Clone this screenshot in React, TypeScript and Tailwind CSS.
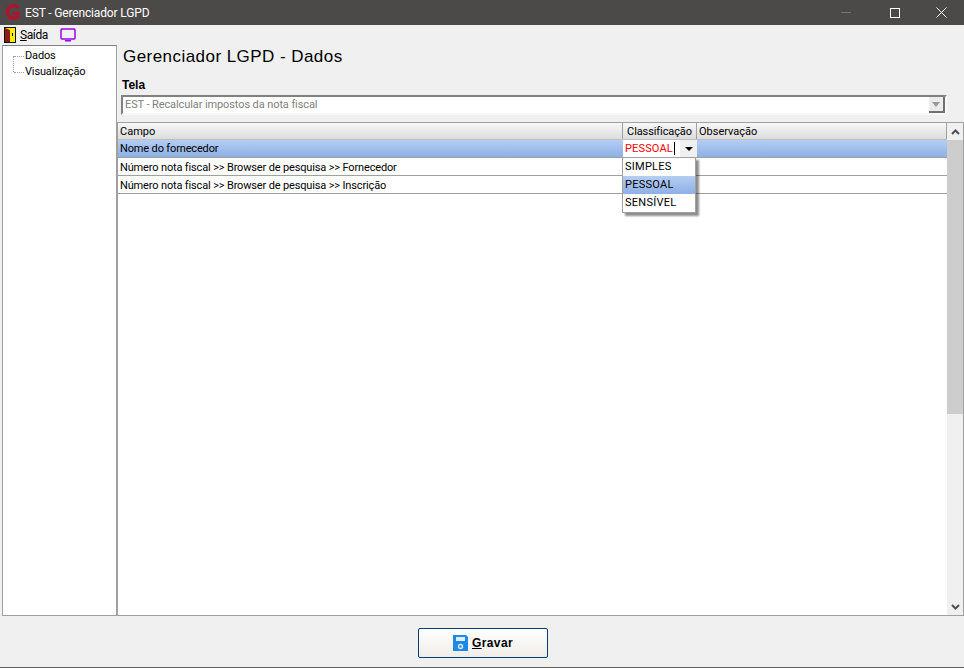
const rows = [
  "Nome do fornecedor",
  "Número nota fiscal >> Browser de pesquisa >> Fornecedor",
  "Número nota fiscal >> Browser de pesquisa >> Inscrição",
];

const selected = "bg-gradient-to-b from-[#b5cdf3] to-[#8eb0e6]";

function GridRow({ label, active }: { label: string; active: boolean }) {
  return (
    <div className={`flex h-[18px] border-b border-[#a0a0a0] ${active ? selected : "bg-white"}`}>
      <div className={`w-[505px] shrink-0 pl-[2px] tracking-[-0.15px] text-black ${active ? "leading-[17px]" : "leading-[19px]"}`}>{label}</div>
      {active ? (
        <div className="flex w-[74px] shrink-0 items-center bg-white">
          <span className="pl-[2px] leading-[17px] tracking-[0.15px] text-[#ff0000]">PESSOAL</span>
          <span className="ml-[1px] h-[13px] w-px bg-black" />
          <div className="ml-auto flex h-full w-[17px] items-center justify-center bg-[#f0f0f0]">
            <span className="h-0 w-0 border-x-[4px] border-t-[4px] border-x-transparent border-t-black" />
          </div>
        </div>
      ) : (
        <div className="w-[74px] shrink-0" />
      )}
      <div className="flex-1" />
    </div>
  );
}

export default function App() {
  return (
    <div className="flex h-[668px] w-[964px] flex-col overflow-hidden bg-[#f0f0f0] font-['Roboto',sans-serif] text-[11px] text-black">
      {/* Title bar */}
      <div className="flex h-[25px] shrink-0 items-center bg-[#4b4a48] pl-[4px] text-white">
        <svg width="17" height="17" viewBox="0 0 17 17" fill="none">
          <path d="M14.500 4A6.300 6.300 0 1 0 14 12.500V9.500H8.500" stroke="#a8172f" strokeWidth="3.600" />
        </svg>
        <span className="ml-[4px] text-[12px] tracking-[-0.15px]">EST - Gerenciador LGPD</span>
        <div className="ml-auto flex h-full items-center">
          <span className="mr-[39px] h-px w-[10px] bg-[#777673]" />
          <span className="mr-[36px] h-[10px] w-[10px] border border-white" />
          <svg className="mr-[17px]" width="11" height="11" viewBox="0 0 11 11" stroke="white" fill="none">
            <path d="M0.5 0.5L10.5 10.5M10.5 0.5L0.5 10.5" />
          </svg>
        </div>
      </div>

      {/* Menu */}
      <div className="flex h-[20px] shrink-0 items-center pl-[4px] text-[12px]">
        <svg width="12" height="16" viewBox="0 0 12 16">
          <rect width="12" height="16" fill="#111" />
          <rect x="1" y="1" width="10" height="14" fill="#ffee00" />
          <path d="M1 1L6 3V15H1Z" fill="#8c1f14" />
          <rect x="8" y="6" width="1" height="3" fill="#111" />
        </svg>
        <span className="ml-[4px] tracking-[-0.4px]">
          <span className="underline">S</span>aída
        </span>
        <svg className="ml-[12px]" width="16" height="14" viewBox="0 0 16 14" fill="none">
          <rect x="1" y="1" width="14" height="10" rx="1" stroke="#a000f0" strokeWidth="1.5" />
          <rect x="5" y="12" width="6" height="1.5" fill="#a000f0" />
        </svg>
      </div>

      {/* Body */}
      <div className="flex min-h-0 flex-1 pl-[2px]">
        {/* Tree */}
        <div className="relative flex h-[571px] w-[115px] shrink-0 flex-col gap-[2px] border border-[#a0a0a0] border-t-[#808080] bg-white pt-[3px]">
          <span className="absolute left-[10px] top-[10px] h-[16px] border-l border-dotted border-[#a0a0a0]" />
          {["Dados", "Visualização"].map((item) => (
            <div key={item} className="flex h-[14px] items-center pl-[11px] leading-[14px] tracking-[-0.15px]">
              <span className="mr-[1px] w-[10px] border-t border-dotted border-[#a0a0a0]" />
              {item}
            </div>
          ))}
        </div>

        <div className="flex min-w-0 flex-1 flex-col">
          <h1 className="ml-[6px] mt-[1px] h-[32px] font-['Liberation_Sans',sans-serif] text-[17px] leading-[22px] tracking-[0.45px]">Gerenciador LGPD - Dados</h1>
          <div className="ml-[5px] h-[17px] font-['Liberation_Sans',sans-serif] text-[12px] font-bold leading-[14px]">Tela</div>

          {/* Combo */}
          <div className="ml-[4px] mr-[17px] flex h-[20px] items-center border-2 border-[#808080] border-b-[#f8f8f8] border-r-[#f8f8f8] bg-white pl-[2px] tracking-[-0.1px] text-[#808080]">
            EST - Recalcular impostos da nota fiscal
            <div className="ml-auto flex h-[16px] w-[16px] items-center justify-center border-b-2 border-r-2 border-[#707070] bg-[#ececec]">
              <span className="h-0 w-0 border-x-[4px] border-t-[5px] border-x-transparent border-t-[#999]" />
            </div>
          </div>

          {/* Grid */}
          <div className="relative mt-[7px] flex h-[494px] border border-[#a0a0a0] bg-white">
            <div className="min-w-0 flex-1">
              <div className="flex h-[17px] border-b border-[#c0c0c0] bg-gradient-to-b from-[#f8f8f8] to-[#dcdcdc]">
                <div className="w-[505px] shrink-0 border-r border-[#a0a0a0] pl-[2px] leading-[17px]">Campo</div>
                <div className="w-[74px] shrink-0 border-r border-[#a0a0a0] text-center leading-[17px] tracking-[-0.1px]">Classificação</div>
                <div className="flex-1 border-r border-[#a0a0a0] pl-[2px] leading-[17px]">Observação</div>
              </div>
              {rows.map((row, i) => (
                <GridRow key={row} label={row} active={i === 0} />
              ))}
            </div>

            {/* Scrollbar */}
            <div className="flex w-[16px] shrink-0 flex-col bg-[#f0f0f0]">
              <div className="flex h-[17px] shrink-0 items-center justify-center">
                <svg width="9" height="6" viewBox="0 0 9 6" fill="none" stroke="#505050" strokeWidth="2">
                  <path d="M1 5L4.500 1.500L8 5" />
                </svg>
              </div>
              <div className="h-[274px] w-full bg-[#cdcdcd]" />
              <div className="mt-auto flex h-[17px] shrink-0 items-center justify-center">
                <svg width="9" height="6" viewBox="0 0 9 6" fill="none" stroke="#505050" strokeWidth="2">
                  <path d="M1 1L4.500 4.500L8 1" />
                </svg>
              </div>
            </div>

            {/* Dropdown list */}
            <div className="absolute left-[504px] top-[34px] w-[74px] border border-[#a0a0a0] bg-white tracking-[0.25px] shadow-[3px_3px_2px_rgba(0,0,0,0.45)]">
              <div className="h-[18px] pl-[2px] leading-[18px]">SIMPLES</div>
              <div className={`h-[18px] pl-[2px] leading-[18px] ${selected}`}>PESSOAL</div>
              <div className="h-[18px] pl-[2px] leading-[18px]">SENSÍVEL</div>
            </div>
          </div>
        </div>
      </div>

      {/* Footer */}
      <div className="flex h-[52px] shrink-0 justify-center border-b border-[#606060] pl-[2px] pt-[12px]">
        <button className="flex h-[30px] w-[130px] items-center justify-center gap-[4px] rounded-[2px] border border-[#003c74] bg-gradient-to-b from-white to-[#f0ede8] font-['Liberation_Sans',sans-serif] text-[12px] font-bold">
          <svg width="15" height="16" viewBox="0 0 15 16">
            <path d="M0 0H13L15 2V16H0Z" fill="#1c8ae6" />
            <rect x="3" y="2" width="9" height="4" fill="#dcecf8" />
            <circle cx="7.500" cy="11.500" r="2" fill="none" stroke="#dcecf8" strokeWidth="1.500" />
          </svg>
          <span className="tracking-[0.4px]">
            <span className="underline">G</span>ravar
          </span>
        </button>
      </div>
    </div>
  );
}
